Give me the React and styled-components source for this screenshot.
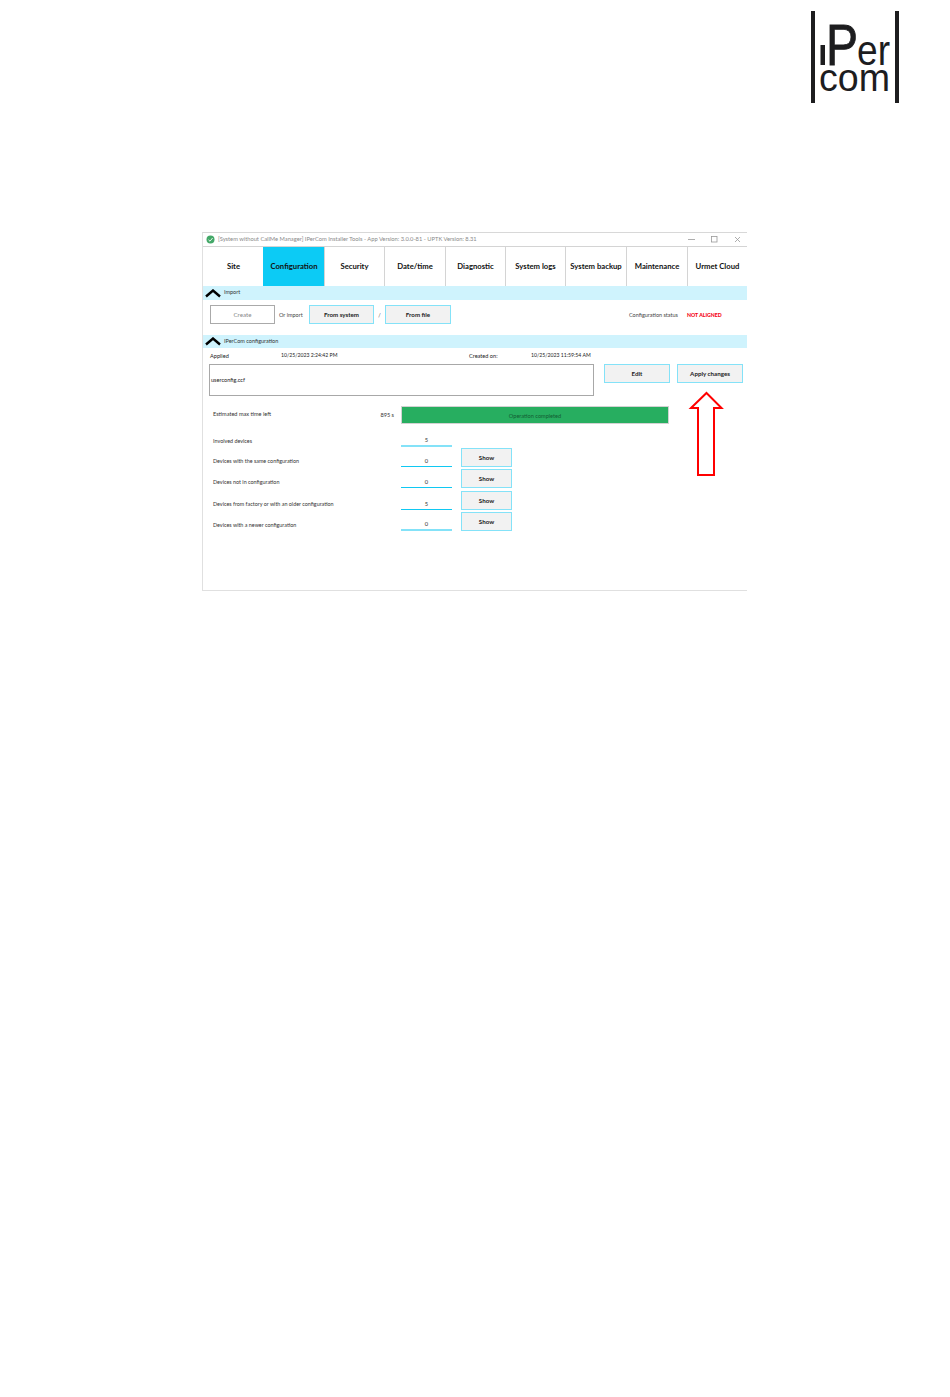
import React from 'react';
import styled, { createGlobalStyle } from 'styled-components';

const GlobalStyle = createGlobalStyle`
  html, body {
    margin: 0;
    padding: 0;
    background: #fff;
  }
  body {
    font-family: "Lato", "Liberation Sans", sans-serif;
    color: #222;
  }
`;

const Page = styled.div`
  width: 950px;
  height: 1397px;
  overflow: hidden;
  padding-top: 11px;
  box-sizing: border-box;
`;

const Header = styled.header`
  display: flex;
  justify-content: flex-end;
  padding-right: 50px;
  height: 92px;
  margin-bottom: 129px;
`;

const Window = styled.main`
  position: relative;
  width: 545px;
  height: 359px;
  margin-left: 202px;
  box-sizing: border-box;
  border-top: 1px solid #d8d8d8;
  border-left: 1px solid #e0e0e0;
  border-bottom: 1px solid #e0e0e0;
  display: flex;
  flex-direction: column;
`;

const TitleBar = styled.div`
  height: 13px;
  display: flex;
  align-items: center;
  padding-left: 3px;
  gap: 3px;
  font-size: 5.75px;
  color: #8a8a8a;
  white-space: nowrap;
`;

const TitleText = styled.span`
  flex: 1;
  padding-bottom: 2px;
`;

const WindowControls = styled.div`
  display: flex;
  gap: 16px;
  padding-right: 6px;
  align-items: center;
`;

const Tabs = styled.nav`
  display: grid;
  grid-template-columns: 60px 61px 60px 61px 60px 60px 61px 61px 60px;
  height: 39px;
  border-top: 1px solid #d4d4d4;
`;

const Tab = styled.div`
  display: flex;
  align-items: center;
  justify-content: center;
  padding-bottom: 2px;
  font-size: 7.7px;
  font-weight: 700;
  color: #111;
  white-space: nowrap;
  box-sizing: border-box;
  border-left: 1px solid ${(props) => (props.$plain ? 'transparent' : '#d4d4d4')};
  background: ${(props) => (props.$active ? '#0ccbf5' : 'transparent')};
`;

const SectionBar = styled.div`
  display: flex;
  align-items: center;
  gap: 3px;
  height: ${(props) => props.$height}px;
  padding-left: 2px;
  background: #cff3fd;
  font-size: 5.5px;
  color: #333;
`;

const SectionTitle = styled.span`
  padding-bottom: 2px;
`;

const ImportRow = styled.div`
  display: flex;
  align-items: center;
  height: 35px;
  padding: 0 0 6px 7px;
  box-sizing: border-box;
  font-size: 5.5px;
  color: #444;
`;

const ActionButton = styled.button`
  display: block;
  width: ${(props) => props.$width || 66}px;
  height: ${(props) => props.$height || 19}px;
  padding: 0 0 1px;
  box-sizing: border-box;
  background: #f2f2f2;
  border: 1px solid #84e2f8;
  font-family: inherit;
  font-size: 6.2px;
  font-weight: 700;
  color: #222;
  white-space: nowrap;
`;

const CreateButton = styled(ActionButton)`
  background: #fff;
  border-color: #aaa;
  font-weight: 400;
  color: #888;
`;

const OrImport = styled.span`
  width: 34px;
  padding-left: 4px;
  box-sizing: border-box;
`;

const Slash = styled.span`
  width: 11px;
  text-align: center;
`;

const StatusLabel = styled.span`
  margin-left: 178px;
  width: 58px;
  white-space: nowrap;
`;

const StatusValue = styled.span`
  color: #f5000f;
  font-size: 5.2px;
  font-weight: 900;
  white-space: nowrap;
`;

const DatesRow = styled.div`
  display: grid;
  grid-template-columns: 71px 188px 62px 1fr;
  height: 16px;
  padding: 0 0 2px 7px;
  box-sizing: border-box;
  align-items: center;
  font-size: 5.6px;
  color: #222;
`;

const DateValue = styled.span`
  font-size: 5.15px;
`;

const FileRow = styled.div`
  display: flex;
  align-items: flex-start;
  padding-left: 6px;
  height: 42px;
`;

const FileBox = styled.div`
  width: 385px;
  height: 32px;
  box-sizing: border-box;
  border: 1px solid #a8a8a8;
  display: flex;
  align-items: center;
  padding: 0 0 2px 1px;
  font-size: 5.6px;
  color: #222;
  margin-right: 10px;
`;

const FileButtons = styled.div`
  display: flex;
  gap: 7px;
`;

const ProgressRow = styled.div`
  display: grid;
  grid-template-columns: 153px 21px 268px;
  column-gap: 7px;
  align-items: center;
  height: 18px;
  padding-left: 10px;
  font-size: 5.6px;
  color: #333;
  margin-bottom: 3px;
`;

const ProgressLabel = styled.span`
  padding-bottom: 3px;
`;

const SecondsLeft = styled.span`
  text-align: right;
  padding-bottom: 1px;
`;

const ProgressBar = styled.div`
  height: 18px;
  box-sizing: border-box;
  background: #27ae60;
  border: 1px solid #d2d2d2;
  display: flex;
  align-items: center;
  justify-content: center;
  color: #135c33;
  font-size: 5.6px;
`;

const Stats = styled.div`
  display: flex;
  flex-direction: column;
  padding-left: 10px;
`;

const StatRow = styled.div`
  display: grid;
  grid-template-columns: 188px 51px 51px;
  column-gap: 0;
  height: ${(props) => props.$height}px;
  font-size: 5.4px;
  color: #333;
`;

const StatLabel = styled.span`
  align-self: end;
  padding-bottom: 3px;
  white-space: nowrap;
`;

const StatValue = styled.span`
  align-self: end;
  text-align: center;
  height: 10px;
  line-height: 9px;
  border-bottom: ${(props) => (props.$thick ? '2px solid #84e2f8' : '1px solid #10c8f2')};
  font-size: 5.8px;
`;

const ShowCell = styled.div`
  margin-left: 9px;
  align-self: end;
`;

const Arrow = styled.svg`
  position: absolute;
  left: 485px;
  top: 158px;
`;

const Logo = () => (
  <svg width="90" height="92" viewBox="0 0 90 92">
    <rect x="1" y="0" width="4" height="92" fill="#1d1d1f" />
    <rect x="85" y="0" width="4" height="92" fill="#1d1d1f" />
    <rect x="10.5" y="34" width="4.5" height="20" fill="#1d1d1f" />
    <text x="16" y="54" fontFamily="Liberation Sans" fontSize="58" textLength="32" lengthAdjust="spacingAndGlyphs" fill="#1d1d1f" stroke="#1d1d1f" strokeWidth="0.8">P</text>
    <text x="47" y="54" fontFamily="Liberation Sans" fontSize="43" textLength="33" lengthAdjust="spacingAndGlyphs" fill="#1d1d1f">er</text>
    <text x="9" y="79.5" fontFamily="Liberation Sans" fontSize="39" textLength="71" lengthAdjust="spacingAndGlyphs" fill="#1d1d1f">com</text>
  </svg>
);

const Chevron = () => (
  <svg width="16" height="9" viewBox="0 0 16 9">
    <polyline points="1,7.5 8,1.5 15,7.5" fill="none" stroke="#000" strokeWidth="2.4" />
  </svg>
);

const AppIcon = () => (
  <svg width="9" height="9" viewBox="0 0 9 9">
    <circle cx="4.5" cy="4.5" r="4" fill="#43a868" />
    <polyline points="2.5,4.8 4,6.2 6.6,3" fill="none" stroke="#e8f5ec" strokeWidth="1" />
  </svg>
);

const tabs = ['Site', 'Configuration', 'Security', 'Date/time', 'Diagnostic', 'System logs', 'System backup', 'Maintenance', 'Urmet Cloud'];

const stats = [
  { label: 'Involved devices', value: 5, height: 20, thick: true },
  { label: 'Devices with the same configuration', value: 0, height: 20, show: true },
  { label: 'Devices not in configuration', value: 0, height: 21, show: true },
  { label: 'Devices from factory or with an older configuration', value: 5, height: 22, show: true },
  { label: 'Devices with a newer configuration', value: 0, height: 21, show: true, thick: true },
];

const App = () => (
  <Page>
    <GlobalStyle />
    <Header>
      <Logo />
    </Header>
    <Window>
      <TitleBar>
        <AppIcon />
        <TitleText>[System without CallMe Manager] IPerCom Installer Tools - App Version: 3.0.0-81 - UPTK Version: 8.31</TitleText>
        <WindowControls>
          <svg width="7" height="7" viewBox="0 0 7 7"><line x1="0" y1="3.5" x2="7" y2="3.5" stroke="#999" strokeWidth="0.8" /></svg>
          <svg width="7" height="7" viewBox="0 0 7 7"><rect x="0.5" y="0.5" width="5.5" height="5.5" fill="none" stroke="#999" strokeWidth="0.8" /></svg>
          <svg width="7" height="7" viewBox="0 0 7 7"><path d="M1 1 L6 6 M6 1 L1 6" stroke="#999" strokeWidth="0.8" /></svg>
        </WindowControls>
      </TitleBar>
      <Tabs>
        {tabs.map((tab, i) => (
          <Tab key={tab} $active={tab === 'Configuration'} $plain={i === 0 || tab === 'Configuration'}>{tab}</Tab>
        ))}
      </Tabs>
      <SectionBar $height={14}>
        <Chevron />
        <SectionTitle>Import</SectionTitle>
      </SectionBar>
      <ImportRow>
        <CreateButton $width={65}>Create</CreateButton>
        <OrImport>Or import</OrImport>
        <ActionButton $width={65}>From system</ActionButton>
        <Slash>/</Slash>
        <ActionButton>From file</ActionButton>
        <StatusLabel>Configuration status</StatusLabel>
        <StatusValue>NOT ALIGNED</StatusValue>
      </ImportRow>
      <SectionBar $height={13}>
        <Chevron />
        <SectionTitle>IPerCom configuration</SectionTitle>
      </SectionBar>
      <DatesRow>
        <span>Applied</span>
        <DateValue>10/25/2023 2:24:42 PM</DateValue>
        <span>Created on:</span>
        <DateValue>10/25/2023 11:59:54 AM</DateValue>
      </DatesRow>
      <FileRow>
        <FileBox>userconfig.ccf</FileBox>
        <FileButtons>
          <ActionButton>Edit</ActionButton>
          <ActionButton>Apply changes</ActionButton>
        </FileButtons>
      </FileRow>
      <ProgressRow>
        <ProgressLabel>Estimated max time left</ProgressLabel>
        <SecondsLeft>895 s</SecondsLeft>
        <ProgressBar>Operation completed</ProgressBar>
      </ProgressRow>
      <Stats>
        {stats.map((stat) => (
          <StatRow key={stat.label} $height={stat.height}>
            <StatLabel>{stat.label}</StatLabel>
            <StatValue $thick={stat.thick}>{stat.value}</StatValue>
            {stat.show && (
              <ShowCell>
                <ActionButton $width={51} $height={19}>Show</ActionButton>
              </ShowCell>
            )}
          </StatRow>
        ))}
      </Stats>
      <Arrow width="36" height="86" viewBox="0 0 36 86">
        <polygon points="18.5,2 33.5,17 26,17 26,84 10,84 10,17 3,17" fill="#fff" stroke="#f00" strokeWidth="2" />
      </Arrow>
    </Window>
  </Page>
);

export default App;
